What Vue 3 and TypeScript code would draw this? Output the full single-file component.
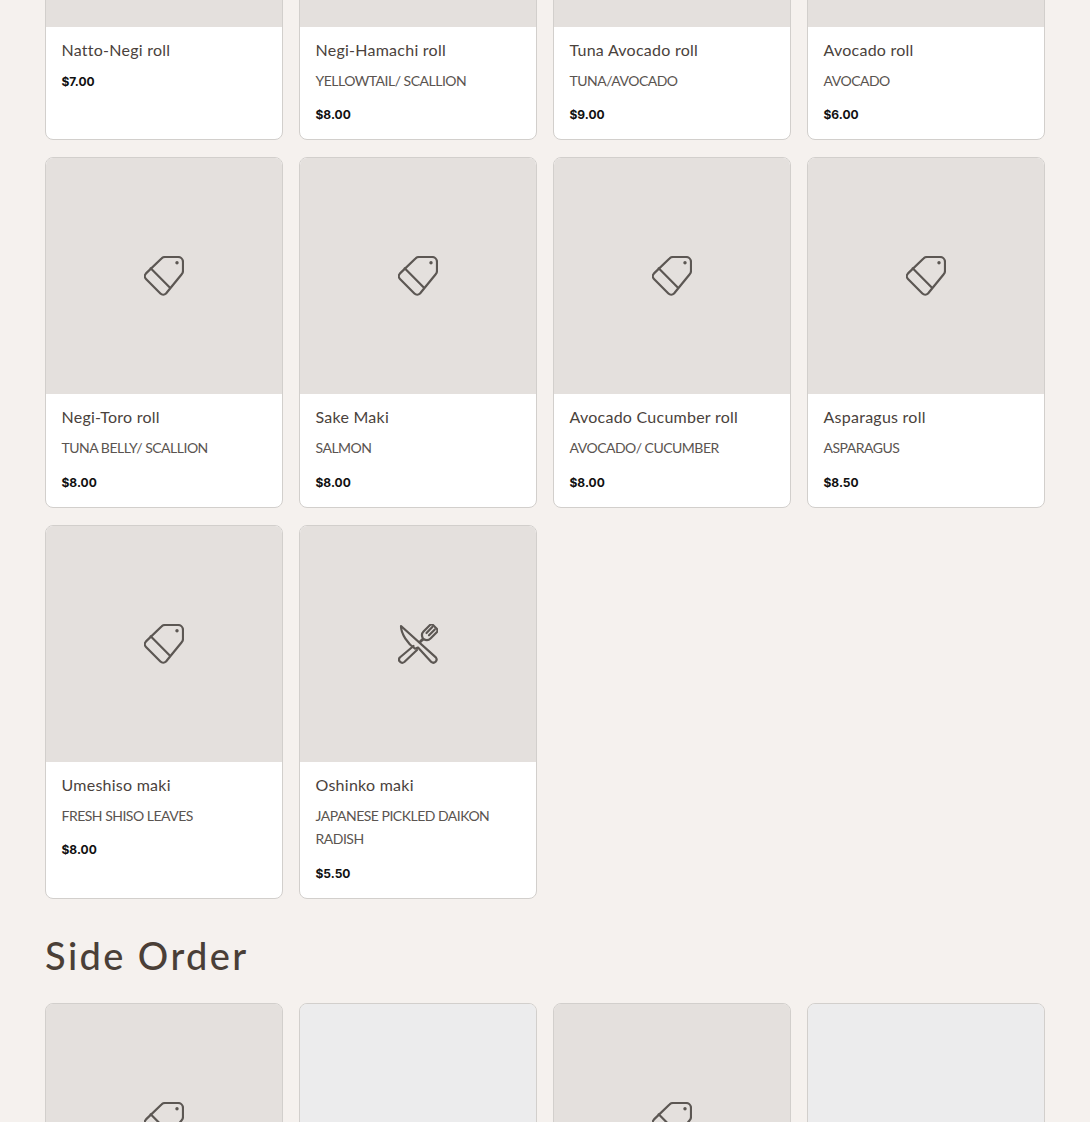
<script setup lang="ts">
interface Item {
  name: string
  desc?: string
  price?: string
  icon?: 'tag' | 'food'
}
const rollItems: Item[] = [
  { name: 'Natto-Negi roll', price: '$7.00', icon: 'tag' },
  { name: 'Negi-Hamachi roll', desc: 'YELLOWTAIL/ SCALLION', price: '$8.00', icon: 'tag' },
  { name: 'Tuna Avocado roll', desc: 'TUNA/AVOCADO', price: '$9.00', icon: 'tag' },
  { name: 'Avocado roll', desc: 'AVOCADO', price: '$6.00', icon: 'tag' },
  { name: 'Negi-Toro roll', desc: 'TUNA BELLY/ SCALLION', price: '$8.00', icon: 'tag' },
  { name: 'Sake Maki', desc: 'SALMON', price: '$8.00', icon: 'tag' },
  { name: 'Avocado Cucumber roll', desc: 'AVOCADO/ CUCUMBER', price: '$8.00', icon: 'tag' },
  { name: 'Asparagus roll', desc: 'ASPARAGUS', price: '$8.50', icon: 'tag' },
  { name: 'Umeshiso maki', desc: 'FRESH SHISO LEAVES', price: '$8.00', icon: 'tag' },
  { name: 'Oshinko maki', desc: 'JAPANESE PICKLED DAIKON RADISH', price: '$5.50', icon: 'food' },
]
const sideItems: Item[] = [
  { name: '', icon: 'tag' },
  { name: '' },
  { name: '', icon: 'tag' },
  { name: '' },
]
const tagPath = 'M21 1H34a5 5 0 0 1 5 5V15a5 5 0 0 1-1.5 3.5L22 37.5a4 4 0 0 1-5.6 0L2 23a4 4 0 0 1 0-5.6L17.5 2.5A5 5 0 0 1 21 1Z'
</script>

<template>
  <div class="viewport">
    <main class="menu">
      <section class="grid">
        <article v-for="item in rollItems" :key="item.name" class="card">
          <div class="thumb">
            <svg v-if="item.icon === 'tag'" class="icon" viewBox="0 0 40 40" fill="none">
              <path :d="tagPath" />
              <path d="M6.7 12.3 26 31.7" />
              <circle cx="33" cy="6.7" r="1.7" class="dot" />
            </svg>
            <svg v-else class="icon" viewBox="0 0 40 40" fill="none">
              <path d="M3 2 37.8 33.4a3.2 3.2 0 0 1-4.5 4.5L20 23.5l-3 1.2C10 20 3 10 3 2Z" />
              <path d="M15.5 22 1.8 33.5a3.2 3.2 0 0 0 4.5 4.5L19 26M21.5 18l3.5-3.5C23 11 24 9 25.5 7.5L32 1q1.5-1.3 3 0l4 4q1 1.5 0 3l-6.5 6.5c-1.5 1.5-3.5 2.5-7 .5l-3 3" />
              <path d="M34.3 3l-5.8 6M36.8 5.5 31 11.3" />
            </svg>
          </div>
          <div class="body">
            <h3 class="name">{{ item.name }}</h3>
            <p v-if="item.desc" class="desc">{{ item.desc }}</p>
            <p class="price" :class="{ tight: !item.desc }">{{ item.price }}</p>
          </div>
        </article>
      </section>

      <h2 class="heading">Side Order</h2>

      <section class="grid">
        <article v-for="(item, i) in sideItems" :key="i" class="card">
          <div class="thumb" :class="{ blank: !item.icon }">
            <svg v-if="item.icon" class="icon" viewBox="0 0 40 40" fill="none">
              <path :d="tagPath" />
              <path d="M6.7 12.3 26 31.7" />
              <circle cx="33" cy="6.7" r="1.7" class="dot" />
            </svg>
          </div>
        </article>
      </section>
    </main>
  </div>
</template>

<style>
body {
  background: #f5f1ee;
}
</style>

<style scoped>
.viewport {
  height: 1122px;
  overflow: hidden;
}

.menu {
  margin-top: -210.5px;
  padding: 0 45px;
}

.grid {
  display: grid;
  grid-template-columns: repeat(4, 238px);
  gap: 17px 16px;
}

.card {
  display: flex;
  flex-direction: column;
  box-sizing: border-box;
  background: #fff;
  border: 1px solid #d2cfcc;
  border-radius: 8px;
  overflow: hidden;
}

.thumb {
  display: flex;
  align-items: center;
  justify-content: center;
  height: 236px;
  background: #e4e0dd;
}

.thumb.blank {
  background: #ececed;
}

.icon {
  width: 40px;
  height: 40px;
  stroke: #5c5753;
  stroke-width: 2.2;
  stroke-linecap: round;
  stroke-linejoin: round;
}

.dot {
  fill: #5c5753;
  stroke: none;
}

.body {
  padding: 11px 15px 12px 15.5px;
}

.name {
  margin: 0;
  font: 400 16px/24px Lato, "Noto Sans", sans-serif;
  letter-spacing: 0.25px;
  color: #4a423c;
}

.desc {
  margin: 7px 0 0;
  font: 400 14px/23.5px Lato, "Noto Sans", sans-serif;
  letter-spacing: -0.5px;
  color: #5a5450;
}

.price {
  margin: 11px 0 0;
  font: 700 12px/24px Inter, sans-serif;
  color: #111;
}

.price.tight {
  margin-top: 8px;
}

.heading {
  margin: 33px 0 25.5px;
  font: 500 38px/46px Lato, "Noto Sans", sans-serif;
  letter-spacing: 2.4px;
  color: #4a3f37;
}
</style>
